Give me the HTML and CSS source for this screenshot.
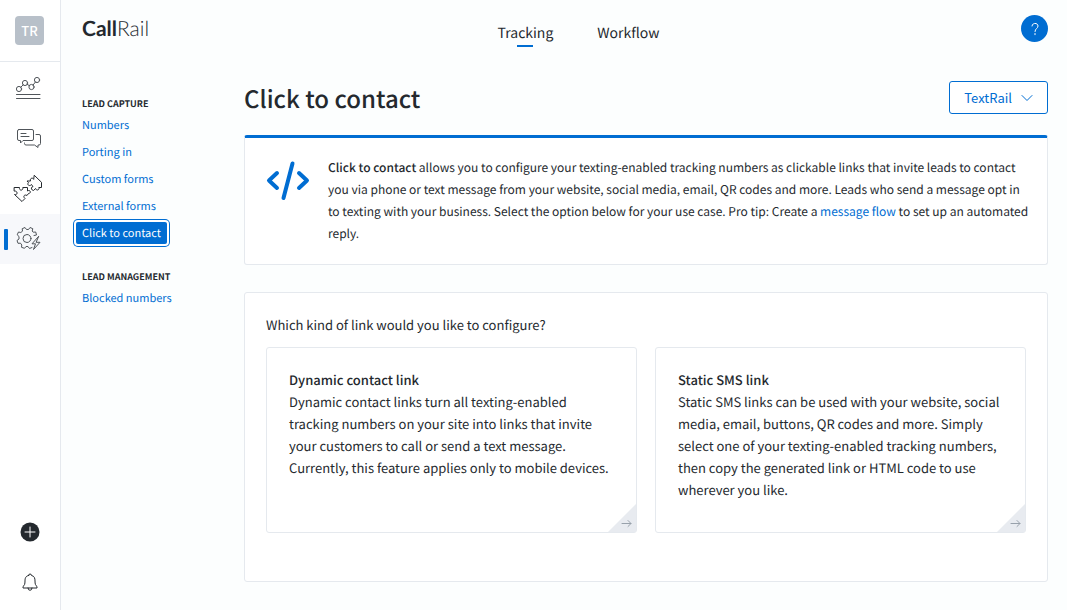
FILE: index.html
```
<!DOCTYPE html>
<html lang="en">
<head>
    <meta charset="UTF-8">
    <meta name="viewport" content="width=device-width, initial-scale=1.0">
    <title>Click to contact - CallRail</title>
    <link rel="stylesheet" href="styles.css">
</head>
<body>
    <!-- Icon rail -->
    <aside class="rail">
        <div class="rail-account">
            <button class="avatar" type="button">TR</button>
        </div>
        <nav class="rail-nav" aria-label="Products">
            <a class="rail-item" href="#" aria-label="Analytics">
                <svg width="28" height="28" viewBox="0 1 28 28">
                    <circle cx="5" cy="15" r="2.6"/>
                    <circle cx="11" cy="9" r="2.6"/>
                    <circle cx="17.500" cy="13" r="2.6"/>
                    <circle cx="23" cy="6" r="2.6"/>
                    <path d="M6.700 13.300L9.300 10.700M13 10.300L15.500 11.700M19 11.100L21.500 7.900"/>
                    <path d="M2.500 20.500H26M2.500 24.500H26"/>
                </svg>
            </a>
            <a class="rail-item" href="#" aria-label="Conversations">
                <svg width="28" height="28" viewBox="0 0 28 28">
                    <path d="M5 4.500H18Q19.500 4.500 19.500 6V14Q19.500 15.500 18 15.500H9L6.500 18V15.500H5Q3.500 15.500 3.500 14V6Q3.500 4.500 5 4.500Z"/>
                    <path d="M7 8.500H12M7 11.500H15"/>
                    <path d="M22 9.500H25Q26.500 9.500 26.500 11V18.500Q26.500 20 25 20H24V22.500L20.500 20H12Q10.500 20 10.500 18.500V18"/>
                </svg>
            </a>
            <a class="rail-item" href="#" aria-label="Integrations">
                <svg class="icon-dark" width="30" height="30" viewBox="0 0 30 30">
                    <path d="M21.500 1.500L28.500 8.300V13.500H25.800C27 15.500 23.500 17.500 22.600 14.500L20.500 16.500C17.500 16 18 12.500 20 12.800L18.500 10.500C16.500 13 13.500 10.500 15.500 8.700L14 7H17.500C16.500 4.500 19.500 3 20.500 5Z"/>
                    <path d="M1.500 13.500H6.500C5.800 17 10.500 17 9.800 13.500H14.500V17C17.500 15 18.500 19.500 15.500 19.500L14 21.500C11.500 20 9.500 22.500 12 24.500L9 27.500L1.500 20.500C5 21.500 5 16.500 1.500 17Z"/>
                </svg>
            </a>
            <a class="rail-item active" href="#" aria-label="Settings">
                <svg width="28" height="28" viewBox="0 0 28 28">
                    <circle cx="13" cy="13.500" r="4"/>
                    <path d="M20 10.500L22.500 10L21.700 7L19.200 7.200L18.200 6L18.800 3.700L16 2.500L14.500 4.500H12.500L11 2.500L8.200 3.700L8.500 6.200L6.800 7.500L4.500 7L3.200 9.800L5 11.500V14L3 15.500L4 18.300L6.500 18.200L7.800 20L7.500 22.300L10.500 23.300L12 21.500H14L15.500 23.500L18 22.500"/>
                    <path d="M24.500 11.500L18 18.800H21.500L19.500 24.500L26 17.300H22.500Z"/>
                </svg>
            </a>
        </nav>
        <div class="rail-footer">
            <button class="rail-button" type="button" aria-label="Create new">
                <svg width="20" height="20" viewBox="0 0 20 20">
                    <circle class="plus-disc" cx="10" cy="10" r="9.500"/>
                    <path class="plus-sign" d="M10 5V15M5 10H15"/>
                </svg>
            </button>
            <button class="rail-button" type="button" aria-label="Notifications">
                <svg class="icon-dark" width="20" height="20" viewBox="0 0 20 20">
                    <path d="M8.500 3.500Q8.500 2 10 2T11.500 3.500C14.500 4 15 6.500 15 9C15 12 15.500 13.500 17 14.500V16H3V14.500C4.500 13.500 5 12 5 9C5 6.500 5.500 4 8.500 3.500ZM8 16Q8 18.300 10 18.300T12 16"/>
                </svg>
            </button>
        </div>
    </aside>

    <div class="app">
        <header class="topbar">
            <a class="logo" href="#"><b>Call</b>Rail</a>
            <nav class="tabs" aria-label="Sections">
                <a class="tab active" href="#">Tracking</a>
                <a class="tab" href="#">Workflow</a>
            </nav>
            <button class="help" type="button" aria-label="Help">
                <svg width="12" height="14" viewBox="0 0 12 14">
                    <path d="M3 4C3 0.500 9 0.500 9 4C9 6.500 6 6.500 6 9.500M6 11.500V12.700"/>
                </svg>
            </button>
        </header>

        <div class="columns">
            <nav class="subnav" aria-label="Tracking">
                <h2>Lead capture</h2>
                <ul>
                    <li><a href="#">Numbers</a></li>
                    <li><a href="#">Porting in</a></li>
                    <li><a href="#">Custom forms</a></li>
                    <li><a href="#">External forms</a></li>
                    <li><a class="current" href="#">Click to contact</a></li>
                </ul>
                <h2>Lead management</h2>
                <ul>
                    <li><a href="#">Blocked numbers</a></li>
                </ul>
            </nav>

            <main class="content">
                <div class="page-head">
                    <h1>Click to contact</h1>
                    <button class="company" type="button">
                        TextRail
                        <svg width="12" height="8" viewBox="0 0 12 8"><path d="M1 1.500L6 6.500L11 1.500"/></svg>
                    </button>
                </div>

                <section class="panel intro">
                    <svg class="code-icon" width="44" height="40" viewBox="0 0 44 40">
                        <path d="M11 12L3 19.500L11 27M33 12L41 19.500L33 27M26.500 2.500L17.500 37"/>
                    </svg>
                    <p><strong>Click to contact</strong> allows you to configure your texting-enabled tracking numbers as clickable links that invite leads to contact you via phone or text message from your website, social media, email, QR codes and more. Leads who send a message opt in to texting with your business. Select the option below for your use case. Pro tip: Create a <a href="#">message flow</a> to set up an automated reply.</p>
                </section>

                <section class="panel chooser">
                    <p>Which kind of link would you like to configure?</p>
                    <div class="options">
                        <a class="option" href="#">
                            <h3>Dynamic contact link</h3>
                            <p>Dynamic contact links turn all texting-enabled tracking numbers on your site into links that invite your customers to call or send a text message. Currently, this feature applies only to mobile devices.</p>
                            <svg class="corner" width="28" height="28" viewBox="0 0 28 28">
                                <path class="fold" d="M28 0V28H0Z"/>
                                <path class="arrow" d="M14 19.500H23M20 16.500L23 19.500L20 22.500"/>
                            </svg>
                        </a>
                        <a class="option" href="#">
                            <h3>Static SMS link</h3>
                            <p>Static SMS links can be used with your website, social media, email, buttons, QR codes and more. Simply select one of your texting-enabled tracking numbers, then copy the generated link or HTML code to use wherever you like.</p>
                            <svg class="corner" width="28" height="28" viewBox="0 0 28 28">
                                <path class="fold" d="M28 0V28H0Z"/>
                                <path class="arrow" d="M14 19.500H23M20 16.500L23 19.500L20 22.500"/>
                            </svg>
                        </a>
                    </div>
                </section>
            </main>
        </div>
    </div>
</body>
</html>
```
FILE: styles.css
```
* {
    box-sizing: border-box;
}

body {
    display: flex;
    min-height: 100vh;
    margin: 0;
    background-color: #fcfefe;
    color: #24292e;
    font-family: "Noto Sans CJK SC", "Open Sans", sans-serif;
    font-size: 13px;
    line-height: 22px;
    text-rendering: geometricPrecision;
}

h1, h2, h3, p, ul {
    margin: 0;
    padding: 0;
}

a {
    color: #006dd2;
    text-decoration: none;
}

button {
    padding: 0;
    border: none;
    background: none;
    font: inherit;
    cursor: pointer;
}

svg {
    display: block;
    fill: none;
    stroke: #50555a;
    stroke-linecap: round;
    stroke-linejoin: round;
}

/* Icon rail */
.rail {
    display: flex;
    flex-direction: column;
    flex: none;
    width: 61px;
    background-color: #fff;
    border-right: 1px solid #e5e9ee;
}

.rail-account {
    padding: 16px 15px;
    border-bottom: 1px solid #e5e9ee;
}

.avatar {
    display: block;
    width: 29px;
    height: 29px;
    border-radius: 4px;
    background-color: #b8c0c9;
    color: #fff;
    font-weight: 500;
}

.rail-nav {
    padding-top: 2px;
}

.rail-item {
    display: flex;
    align-items: center;
    justify-content: center;
    height: 50px;
    padding-right: 4px;
}

.rail-item.active {
    position: relative;
    background-color: #f7f8fb;
}

.rail-item.active::before {
    content: "";
    position: absolute;
    left: 4px;
    top: 15px;
    width: 4px;
    height: 21px;
    border-radius: 1px;
    background-color: #006dd2;
}

.icon-dark {
    stroke: #24292e;
}

.rail-footer {
    display: flex;
    flex-direction: column;
    align-items: center;
    gap: 30px;
    margin-top: auto;
    padding-bottom: 18px;
}

.plus-disc {
    fill: #24292e;
    stroke: none;
}

.plus-sign {
    stroke: #fff;
}

/* Top bar */
.app {
    flex: 1;
    min-width: 0;
    padding: 0 19px 28px 15px;
}

.topbar {
    display: grid;
    grid-template-columns: 1fr auto 1fr;
    align-items: center;
    height: 62px;
    padding: 0 0 5px 6px;
}

.logo {
    color: #24292e;
    font-family: Lato, sans-serif;
    font-size: 21px;
    font-weight: 300;
}

.logo b {
    font-weight: 700;
}

.tabs {
    display: flex;
    gap: 44px;
    padding: 8px 0 0 27px;
}

.tab {
    position: relative;
    color: #24292e;
    font-size: 14px;
}

.tab.active::after {
    content: "";
    position: absolute;
    left: calc(50% - 8px);
    bottom: -3px;
    width: 16px;
    height: 2px;
    background-color: #006dd2;
}

.help {
    display: flex;
    align-items: center;
    justify-content: center;
    justify-self: end;
    width: 27px;
    height: 27px;
    border-radius: 50%;
    background-color: #006dd2;
}

.help svg {
    stroke: #fff;
}

/* Section menu */
.columns {
    display: flex;
}

.subnav {
    flex: none;
    width: 168px;
    padding-top: 33px;
}

.subnav h2 {
    padding-left: 6px;
    font-size: 9px;
    font-weight: 700;
    line-height: 18px;
    text-transform: uppercase;
}

.subnav ul {
    margin-bottom: 19px;
    padding-top: 1px;
    list-style: none;
}

.subnav li {
    padding-bottom: 5px;
}

.subnav li a {
    display: inline-block;
    padding: 0 6px;
    border-radius: 2px;
    font-size: 11px;
    vertical-align: top;
}

.subnav .current {
    background-color: #006dd2;
    box-shadow: 0 0 0 2px #fff, 0 0 0 3px #006dd2;
    color: #fff;
}

/* Page */
.content {
    flex: 1;
    min-width: 0;
}

.page-head {
    display: flex;
    align-items: center;
    justify-content: space-between;
    padding: 19px 0 21px;
}

h1 {
    font-size: 24px;
    font-weight: 500;
    line-height: 33px;
}

.company {
    display: flex;
    align-items: center;
    gap: 9px;
    height: 33px;
    padding: 0 14px;
    border: 1px solid #006dd2;
    border-radius: 3px;
    background-color: #fff;
    color: #006dd2;
}

.company svg {
    stroke: #006dd2;
}

.panel {
    background-color: #fff;
    border: 1px solid #e5e9ee;
    border-radius: 3px;
}

.intro {
    display: flex;
    align-items: flex-start;
    gap: 18px;
    margin-bottom: 27px;
    padding: 19px 14px 19px 21px;
    border-top: 3px solid #006dd2;
}

.code-icon {
    flex: none;
    margin-top: 4px;
    stroke: #006dd2;
    stroke-width: 4;
}

.intro strong {
    font-weight: 500;
}

.intro p {
    font-size: 12px;
}

.chooser {
    padding: 21px 21px 48px;
}

.options {
    display: grid;
    grid-template-columns: 1fr 1fr;
    gap: 18px;
    margin-top: 11px;
}

.option {
    position: relative;
    min-height: 186px;
    padding: 21px 22px 30px;
    border: 1px solid #e5e9ee;
    border-radius: 3px;
    color: #24292e;
}

.option h3 {
    font-size: 13px;
    font-weight: 500;
}

.corner {
    position: absolute;
    right: 0;
    bottom: 0;
}

.fold {
    fill: #e8ebf0;
    stroke: none;
}

.arrow {
    stroke: #98a1ab;
}
```
